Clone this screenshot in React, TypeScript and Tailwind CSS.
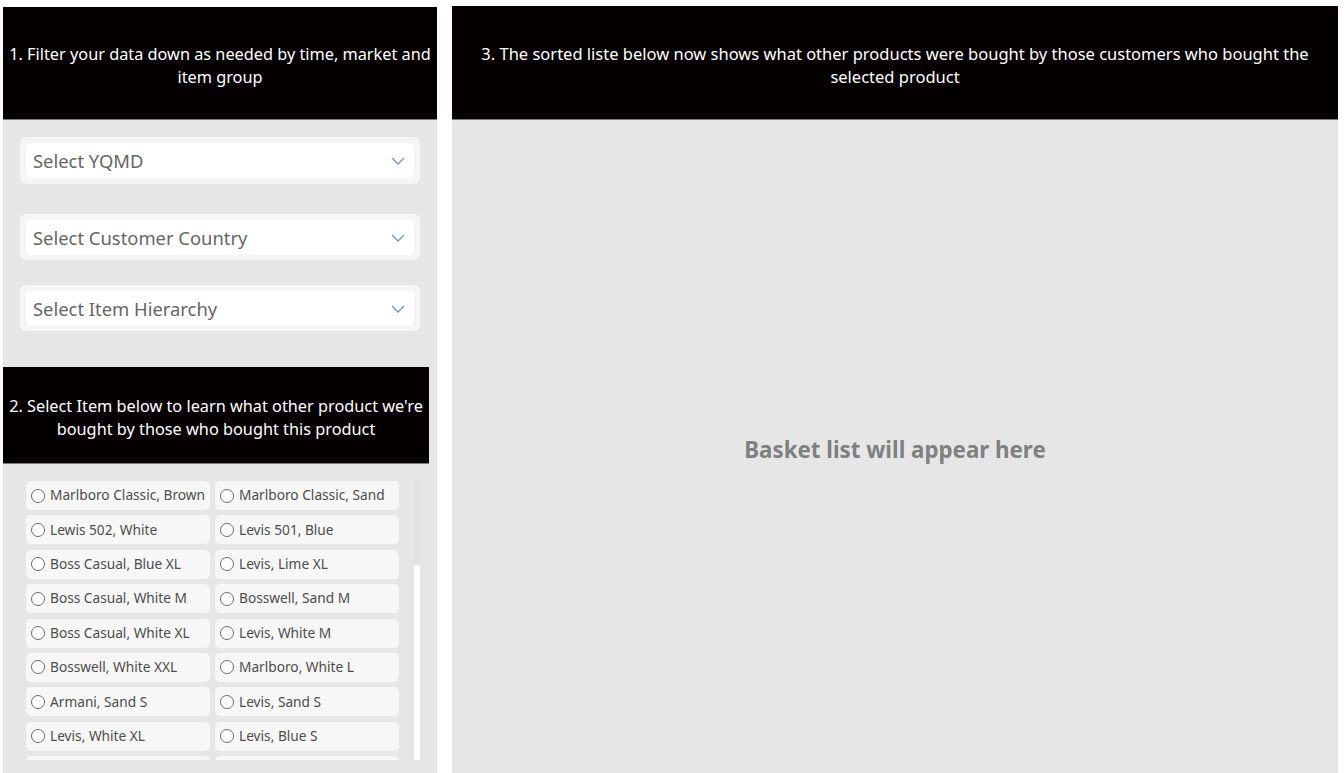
import React from 'react';

const items: [string, string][] = [
  ['Marlboro Classic, Brown', 'Marlboro Classic, Sand'],
  ['Lewis 502, White', 'Levis 501, Blue'],
  ['Boss Casual, Blue XL', 'Levis, Lime XL'],
  ['Boss Casual, White M', 'Bosswell, Sand M'],
  ['Boss Casual, White XL', 'Levis, White M'],
  ['Bosswell, White XXL', 'Marlboro, White L'],
  ['Armani, Sand S', 'Levis, Sand S'],
  ['Levis, White XL', 'Levis, Blue S'],
];

function Chevron() {
  return (
    <svg width="14" height="8" viewBox="0 0 14 8" fill="none" className="shrink-0">
      <path d="M1 1l6 6 6-6" stroke="#6f93c4" strokeWidth="1.3" />
    </svg>
  );
}

function Dropdown({ label, className }: { label: string; className?: string }) {
  return (
    <div className={'w-[400px] rounded-[6px] bg-[#f5f5f5] p-[6px] ' + (className ?? '')}>
      <div className="flex h-[35px] items-center justify-between rounded-[5px] bg-white pl-[7px] pr-[9px]">
        <span className="text-[18.4px] text-[#666666]">{label}</span>
        <Chevron />
      </div>
    </div>
  );
}

function RadioItem({ label }: { label?: string }) {
  return (
    <div className="flex h-[29px] items-center gap-[5px] rounded-[5px] bg-[#f7f7f7] pl-[5px]">
      {label && (
        <>
          <span className="h-[14px] w-[14px] shrink-0 rounded-full border border-[#6b6b6b] bg-white" />
          <span className="whitespace-nowrap text-[13.7px] text-[#4d4d4d]">{label}</span>
        </>
      )}
    </div>
  );
}

function Banner({ children, className }: { children: React.ReactNode; className?: string }) {
  return (
    <div
      className={
        'flex items-center justify-center border-b border-[#7a7a7a] bg-[#040000] text-center leading-[23px] text-white ' +
        (className ?? '')
      }
    >
      {children}
    </div>
  );
}

export default function App() {
  return (
    <div
      className="flex h-[773px] w-[1344px] gap-[15px] overflow-hidden bg-white pl-[3px] pt-[6px]"
      style={{ fontFamily: '"Noto Sans", "Open Sans", sans-serif' }}
    >
      {/* left column */}
      <div className="mt-[1px] flex w-[434px] flex-col bg-[#e6e6e6]">
        <Banner className="h-[113px] whitespace-nowrap pt-[5px] text-[16.3px]">
          <div>
            1. Filter your data down as needed by time, market and
            <br />
            item group
          </div>
        </Banner>

        <div className="flex flex-col pl-[17px]">
          <Dropdown label="Select YQMD" className="mt-[17px] h-[47px]" />
          <Dropdown label="Select Customer Country" className="mt-[30px] h-[46px]" />
          <Dropdown label="Select Item Hierarchy" className="mt-[25px] h-[46px]" />
        </div>

        <Banner className="mt-[36px] h-[97px] w-[426px] whitespace-nowrap pt-[5px] text-[16.3px]">
          <div>
            2. Select Item below to learn what other product we're
            <br />
            bought by those who bought this product
          </div>
        </Banner>

        <div className="mt-[17px] flex h-[279px] pl-[23px]">
          <div className="grid h-full w-[373px] grid-cols-2 content-start gap-x-[5px] gap-y-[5.4px] overflow-hidden">
            {items.map(([a, b]) => (
              <React.Fragment key={a}>
                <RadioItem label={a} />
                <RadioItem label={b} />
              </React.Fragment>
            ))}
            <RadioItem />
            <RadioItem />
          </div>
          <div className="ml-[15px] flex h-full w-[6px] flex-col bg-white">
            <div className="h-[84px] bg-[#e1e1e1]" />
          </div>
        </div>
      </div>

      {/* right column */}
      <div className="flex w-[886px] flex-col bg-[#e6e6e6]">
        <Banner className="h-[114px] px-6 pt-[4px] text-[16.5px]">
          3. The sorted liste below now shows what other products were bought by those customers who bought the selected product
        </Banner>
        <div className="flex flex-1 items-center justify-center pt-[7px]">
          <span className="text-[22.3px] font-bold text-[#808080]">Basket list will appear here</span>
        </div>
      </div>
    </div>
  );
}
